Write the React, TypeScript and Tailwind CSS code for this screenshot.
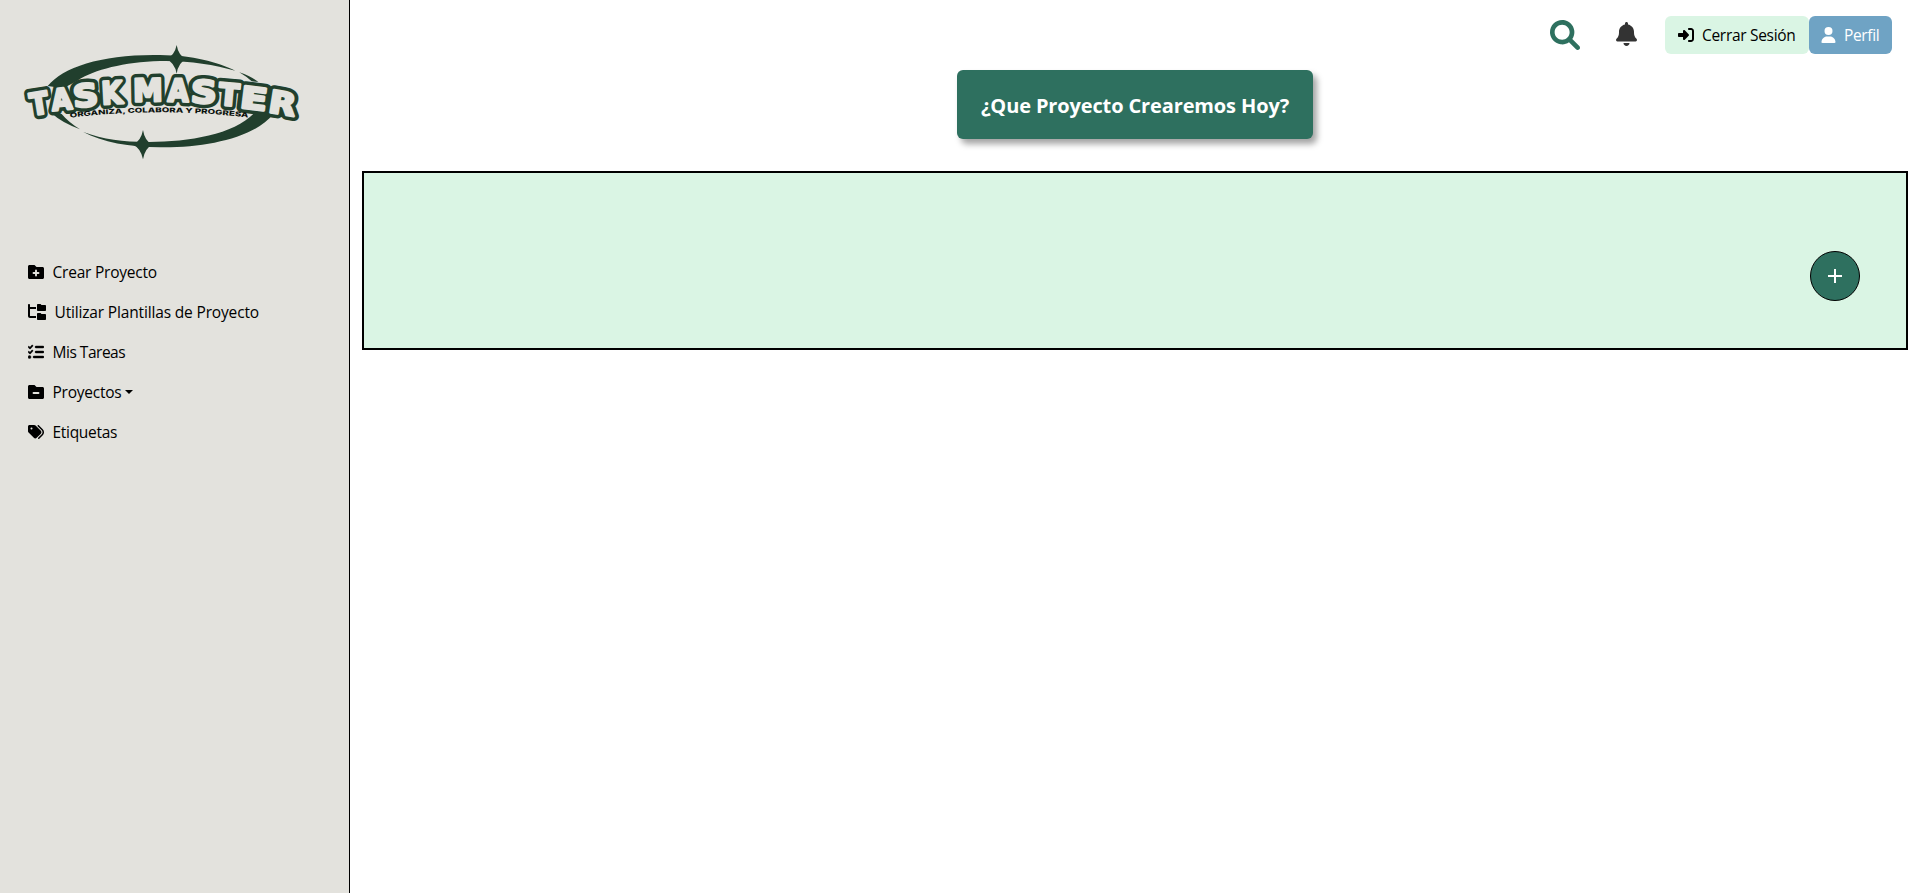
import type { ReactNode } from "react";
import { FaBell, FaFolderTree, FaListCheck, FaRightToBracket, FaTags, FaUser } from "react-icons/fa6";

type Glyph = { ch: string; cx: number; base: number; w: number; h: number; rot: number };

const GLYPHS: Glyph[] = [
  { ch: "T", cx: 123, base: 257, w: 60, h: 76, rot: -9 },
  { ch: "A", cx: 188, base: 244, w: 66, h: 74, rot: -6 },
  { ch: "S", cx: 260, base: 234, w: 80, h: 78, rot: -5 },
  { ch: "K", cx: 338, base: 226, w: 68, h: 78, rot: -3 },
  { ch: "M", cx: 444, base: 219, w: 94, h: 78, rot: -1 },
  { ch: "A", cx: 534, base: 219, w: 68, h: 78, rot: 1 },
  { ch: "S", cx: 610, base: 224, w: 82, h: 78, rot: 3 },
  { ch: "T", cx: 684, base: 231, w: 66, h: 76, rot: 5 },
  { ch: "E", cx: 757, base: 242, w: 86, h: 76, rot: 7 },
  { ch: "R", cx: 842, base: 257, w: 86, h: 78, rot: 9 },
];

function Letter({ g, className, strokeWidth }: { g: Glyph; className: string; strokeWidth: number }) {
  return (
    <text
      x={-(g.w - 5) / 2}
      y={-5}
      fontSize={(g.h - 10) / 0.729}
      fontWeight={700}
      textLength={g.w - 5}
      lengthAdjust="spacingAndGlyphs"
      transform={`translate(${g.cx} ${g.base}) rotate(${g.rot})`}
      className={className}
      strokeWidth={strokeWidth}
      strokeLinejoin="round"
    >
      {g.ch}
    </text>
  );
}

function Logo() {
  return (
    <svg viewBox="0 0 1047 420" className="block h-[140px] w-[349px] font-['Inter',sans-serif]">
      <g className="fill-[#213f2d]">
        <path d="M143 168C190 110 310 72 480 75C580 76 650 96 706 122C640 103 560 91 480 93C370 97 285 118 232 152L190 175Z" />
        <path d="M718 127Q755 140 775 156L755 154Q740 140 718 127Z" />
        <path d="M155 250L185 252Q205 276 240 298Q185 278 155 250Z" />
        <path d="M250 306C310 328 370 336 440 336C560 337 700 315 762 250L820 252C765 322 620 354 480 352C390 352 305 336 250 306Z" />
        <path d="M530 45Q535 76 558 87Q535 98 530 131Q524 98 499 87Q524 76 530 45Z" />
        <path d="M429 300Q434 333 457 344Q434 355 429 388Q423 355 399 344Q423 333 429 300Z" />
      </g>
      <g className="font-['DejaVu_Sans',sans-serif]">
        {GLYPHS.map((g, i) => (
          <Letter key={i} g={g} className="fill-[#213f2d] stroke-[#213f2d]" strokeWidth={29} />
        ))}
        {GLYPHS.map((g, i) => (
          <g key={i}>
            <Letter g={g} className="fill-[#213f2d] stroke-[#213f2d]" strokeWidth={18} />
            <Letter g={g} className="fill-[#e3e2dd] stroke-[#e3e2dd]" strokeWidth={8} />
          </g>
        ))}
      </g>
      <path id="tagline" d="M210 263Q480 231 748 263" fill="none" />
      <text fontSize={20} fontWeight={800} className="fill-[#0c120e]">
        <textPath href="#tagline" textLength={536} lengthAdjust="spacingAndGlyphs">
          ORGANIZA, COLABORA Y PROGRESA
        </textPath>
      </text>
    </svg>
  );
}

const FOLDER = "M464 96h-192l-64-64h-160C21.5 32 0 53.5 0 80v352C0 458.5 21.5 480 48 480h416c26.5 0 48-21.5 48-48v-288C512 117.5 490.5 96 464 96z";

function Folder({ plus = false }: { plus?: boolean }) {
  return (
    <svg viewBox="0 0 512 512" className="size-4">
      <path d={FOLDER} />
      <path
        d={plus ? "M176 288H336M256 208V368" : "M176 288H336"}
        className="stroke-[#e3e2dd]"
        strokeWidth={60}
        strokeLinecap="round"
      />
    </svg>
  );
}

function SearchIcon() {
  return (
    <svg viewBox="0 0 512 512" className="mr-9 mt-1 size-[30px] fill-[#2e705f]">
      <path d="M500.3 443.7l-119.7-119.7c27.22-40.41 40.65-90.9 33.46-144.7C401.8 87.79 326.8 13.32 235.2 1.723C99.01-15.51-15.51 99.01 1.724 235.2c11.6 91.64 86.08 166.7 177.6 178.9c53.8 7.189 104.3-6.236 144.7-33.46l119.7 119.7c15.62 15.62 40.95 15.62 56.57 0C515.9 484.7 515.9 459.3 500.3 443.7zM79.1 208c0-70.58 57.42-128 128-128s128 57.42 128 128c0 70.58-57.42 128-128 128S79.1 278.6 79.1 208z" />
    </svg>
  );
}

function NavItem({ icon, children }: { icon: ReactNode; children: ReactNode }) {
  return (
    <a className="flex h-10 items-center gap-[8.5px] pl-7 text-[15.5px] leading-6 text-black">
      {icon}
      {children}
    </a>
  );
}

export default function App() {
  return (
    <div className="flex h-[893px] w-full overflow-hidden bg-white font-['Open_Sans','Noto_Sans',sans-serif] text-black">
      <aside className="w-[350px] shrink-0 border-r border-black bg-[#e3e2dd] pt-[30px]">
        <Logo />
        <nav className="mt-[82px] flex flex-col">
          <NavItem icon={<Folder plus />}>
            <span className="tracking-[-0.22px]">Crear Proyecto</span>
          </NavItem>
          <NavItem icon={<FaFolderTree className="h-4 w-[18px]" />}>
            <span className="tracking-[-0.16px]">Utilizar Plantillas de Proyecto</span>
          </NavItem>
          <NavItem icon={<FaListCheck className="size-4 stroke-black" strokeWidth={14} />}>
            <span className="tracking-[-0.48px]">Mis Tareas</span>
          </NavItem>
          <NavItem icon={<Folder />}>
            <span className="flex items-center gap-1 tracking-[-0.25px]">
              Proyectos
              <span className="border-x-4 border-t-4 border-x-transparent border-t-black" />
            </span>
          </NavItem>
          <NavItem icon={<FaTags className="size-4" />}>
            <span className="tracking-[-0.3px]">Etiquetas</span>
          </NavItem>
        </nav>
      </aside>

      <main className="flex flex-1 flex-col px-3">
        <header className="flex h-[70px] items-start justify-end pr-4 pt-4">
          <SearchIcon />
          <FaBell className="mr-7 mt-1.5 h-6 w-[21px] text-[#333333]" />
          <button className="flex h-[38px] w-36 items-center gap-2 rounded-md bg-[#daf5e4] pl-[13px] text-[15.5px] text-black">
            <FaRightToBracket className="size-4" />
            <span className="whitespace-nowrap pt-px tracking-[-0.3px]">Cerrar Sesión</span>
          </button>
          <button className="flex h-[38px] w-[83px] items-center gap-2 rounded-md bg-[#6fa3c4] pl-3 text-[15.5px] text-white">
            <FaUser className="h-4 w-[15px]" />
            <span className="pt-px tracking-[-0.35px]">Perfil</span>
          </button>
        </header>

        <h1 className="flex h-[69px] w-[356px] items-center justify-center self-center whitespace-nowrap rounded-md bg-[#2e705f] pt-0.5 text-[20px] font-bold tracking-[-0.13px] text-white shadow-[4px_5px_6px_rgba(0,0,0,0.36)]">
          ¿Que Proyecto Crearemos Hoy?
        </h1>

        <section className="mt-8 flex h-[179px] items-start justify-end border-2 border-black bg-[#daf5e4] pr-[46px] pt-[78px]">
          <button className="flex size-[50px] items-center justify-center rounded-full border border-black bg-[#2e705f]">
            <svg viewBox="0 0 14 14" className="size-3.5 stroke-white" strokeWidth={2}>
              <path d="M7 0V14M0 7H14" />
            </svg>
          </button>
        </section>
      </main>
    </div>
  );
}
